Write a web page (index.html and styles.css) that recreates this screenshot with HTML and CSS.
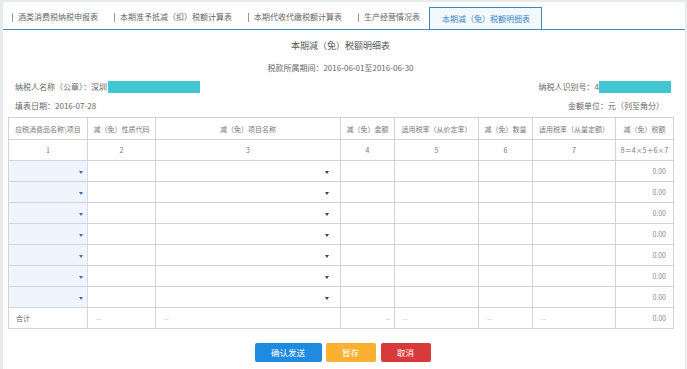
FILE: index.html
```html
<!DOCTYPE html>
<html lang="zh-CN">
<head>
<meta charset="utf-8">
<title>本期减（免）税额明细表</title>
<link rel="stylesheet" href="styles.css">
</head>
<body>
<div class="frame">
  <div class="tabs">
    <div class="tab">酒类消费税纳税申报表</div>
    <div class="tab">本期准予抵减（扣）税额计算表</div>
    <div class="tab">本期代收代缴税额计算表</div>
    <div class="tab tab-last">生产经营情况表</div>
    <div class="tab-active">本期减（免）税额明细表</div>
  </div>
  <div class="content">
    <div class="title">本期减（免）税额明细表</div>
    <div class="period">税款所属期间：2016-06-01至2016-06-30</div>
    <div class="info-row row1">
      <div class="info-item">纳税人名称（公章）：深圳<span class="mask mask-name"></span></div>
      <div class="info-item right-id">纳税人识别号：4<span class="mask mask-id"></span></div>
    </div>
    <div class="info-row row2">
      <div class="info-item">填表日期：2016-07-28</div>
      <div class="info-item unit">金额单位：元（列至角分）</div>
    </div>
    <table class="grid">
      <colgroup>
        <col style="width:79px"><col style="width:68px"><col style="width:185px"><col style="width:54px"><col style="width:84px"><col style="width:54px"><col style="width:83px"><col style="width:58px">
      </colgroup>
      <thead>
        <tr class="head">
          <th>应税消费品名称\项目</th><th>减（免）性质代码</th><th>减（免）项目名称</th><th>减（免）金额</th><th>适用税率（从价定率）</th><th>减（免）数量</th><th>适用税率（从量定额）</th><th>减（免）税额</th>
        </tr>
        <tr class="nums">
          <th>1</th><th>2</th><th>3</th><th>4</th><th>5</th><th>6</th><th>7</th><th>8＝4×5＋6×7</th>
        </tr>
      </thead>
      <tbody>
        <tr class="data"><td class="sel1"><i class="arr arr-blue"></i></td><td></td><td class="sel3"><i class="arr"></i></td><td></td><td></td><td></td><td></td><td class="amt">0.00</td></tr>
        <tr class="data"><td class="sel1"><i class="arr arr-blue"></i></td><td></td><td class="sel3"><i class="arr"></i></td><td></td><td></td><td></td><td></td><td class="amt">0.00</td></tr>
        <tr class="data"><td class="sel1"><i class="arr arr-blue"></i></td><td></td><td class="sel3"><i class="arr"></i></td><td></td><td></td><td></td><td></td><td class="amt">0.00</td></tr>
        <tr class="data"><td class="sel1"><i class="arr arr-blue"></i></td><td></td><td class="sel3"><i class="arr"></i></td><td></td><td></td><td></td><td></td><td class="amt">0.00</td></tr>
        <tr class="data"><td class="sel1"><i class="arr arr-blue"></i></td><td></td><td class="sel3"><i class="arr"></i></td><td></td><td></td><td></td><td></td><td class="amt">0.00</td></tr>
        <tr class="data"><td class="sel1"><i class="arr arr-blue"></i></td><td></td><td class="sel3"><i class="arr"></i></td><td></td><td></td><td></td><td></td><td class="amt">0.00</td></tr>
        <tr class="data"><td class="sel1"><i class="arr arr-blue"></i></td><td></td><td class="sel3"><i class="arr"></i></td><td></td><td></td><td></td><td></td><td class="amt">0.00</td></tr>
        <tr class="total">
          <td class="t-label">合计</td><td class="dash">--</td><td class="dash">--</td><td class="dash dash-r">--</td><td class="dash">--</td><td class="dash">--</td><td class="dash">--</td><td class="amt">0.00</td>
        </tr>
      </tbody>
    </table>
    <div class="actions">
      <button class="btn btn-send">确认发送</button>
      <button class="btn btn-save">暂存</button>
      <button class="btn btn-cancel">取消</button>
    </div>
  </div>
</div>
</body>
</html>
```
FILE: styles.css
```css
* { box-sizing: border-box; }
html, body { margin: 0; padding: 0; }
body {
  background: #e6ece9;
  font-family: "Noto Sans CJK SC", "Noto Sans", sans-serif;
  color: #666;
  width: 687px;
  height: 369px;
  overflow: hidden;
}
.frame {
  margin: 2px 2px 0 3px;
  background: #fff;
  height: 367px;
}
.tabs {
  height: 28px;
  border-bottom: 1px solid #3f89c6;
  display: flex;
  align-items: flex-end;
  padding-left: 9px;
}
.tab {
  font-size: 8px;
  line-height: 10px;
  color: #666;
  display: flex;
  align-items: center;
  padding-right: 16px;
  margin-bottom: 7px;
  white-space: nowrap;
}
.tab::before {
  content: "";
  display: inline-block;
  width: 1px;
  height: 9px;
  background: #999;
  margin-right: 5px;
}
.tab-last { padding-right: 9px; }
.tab-active {
  height: 23px;
  margin-bottom: -1px;
  border: 1px solid #3f89c6;
  background: #f3f8fd;
  color: #3a85c8;
  font-size: 8px;
  line-height: 21px;
  padding: 0 11px 0 12px;
  white-space: nowrap;
}
.content {
  padding: 0 12px 0 5px;
}
.title {
  margin-top: 10px;
  font-size: 9px;
  line-height: 12px;
  text-align: center;
  color: #555;
}
.period {
  margin-top: 10px;
  font-size: 8px;
  line-height: 12px;
  text-align: center;
  color: #666;
}
.info-row {
  display: flex;
  justify-content: space-between;
  align-items: center;
  font-size: 8px;
  height: 12px;
  line-height: 12px;
  color: #666;
}
.row1 { margin-top: 7px; }
.row2 { margin-top: 7px; }
.info-item { display: flex; align-items: center; white-space: nowrap; padding-left: 7px; }
.mask {
  display: inline-block;
  height: 12px;
  background: #41c6d2;
}
.mask-name { width: 92px; margin-left: 1px; }
.mask-id { width: 72px; }
.right-id { padding-right: 2px; }
.unit { padding-right: 9px; }
.grid {
  margin-top: 5px;
  width: 665px;
  border-collapse: collapse;
  table-layout: fixed;
  font-size: 7px;
  color: #777;
}
.grid th, .grid td {
  border: 1px solid #d3d3d3;
  padding: 0;
  font-weight: normal;
  white-space: nowrap;
  overflow: hidden;
}
.head th { height: 22px; text-align: center; }
.nums th { height: 21px; text-align: center; }
.data td { height: 21px; }
.total td { height: 21px; }
.data td:nth-child(n+3):nth-child(-n+7),
.total td:nth-child(n+3):nth-child(-n+7) { border-left-color: #ababab; }
.data td:nth-child(8), .total td:nth-child(8) { border-left-color: #c4c4c4; }
.sel1 { background: #eef5fd; text-align: right; padding-right: 4px !important; border-right-color: #d3dbe6 !important; }
.sel3 { text-align: right; padding-right: 11px !important; }
.arr {
  display: inline-block;
  width: 0;
  height: 0;
  border-left: 2.5px solid transparent;
  border-right: 2.5px solid transparent;
  border-top: 3px solid #444;
  vertical-align: middle;
}
.arr-blue { border-top-color: #3d6cb8; }
.amt { text-align: right; padding-right: 7px !important; color: #888; }
.t-label { padding-left: 7px !important; color: #666; }
.dash { color: #b5b5b5; padding-left: 8px !important; }
.dash-r { text-align: right; padding-left: 0 !important; padding-right: 4px !important; }
.actions {
  margin-top: 14px;
  display: flex;
  justify-content: center;
  padding-left: 4px;
}
.btn {
  height: 19px;
  border: none;
  border-radius: 2px;
  color: #fff;
  font-family: "Noto Sans CJK SC", sans-serif;
  font-size: 8.5px;
  line-height: 19px;
  padding: 0;
  margin: 0;
}
.btn-send { width: 67px; background: #1f8be0; }
.btn-save { width: 50px; background: #fab132; margin-left: 4px; }
.btn-cancel { width: 50px; background: #d8393b; margin-left: 5px; }
```
